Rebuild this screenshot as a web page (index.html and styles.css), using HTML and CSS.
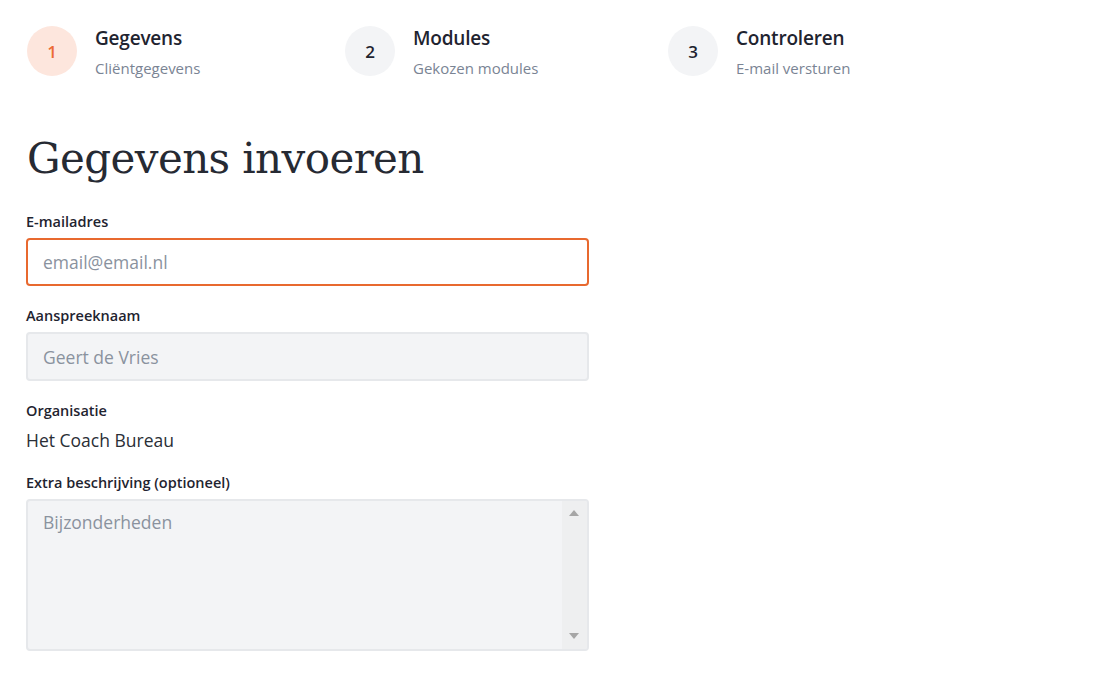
FILE: index.html
```html
<!DOCTYPE html>
<html lang="nl">
<head>
<meta charset="utf-8">
<title>Gegevens invoeren</title>
<link rel="stylesheet" href="styles.css">
</head>
<body>
<div class="page">
  <ol class="steps">
    <li class="step step-active">
      <span class="step-num">1</span>
      <div class="step-text">
        <span class="step-title">Gegevens</span>
        <span class="step-sub">Cliëntgegevens</span>
      </div>
    </li>
    <li class="step">
      <span class="step-num">2</span>
      <div class="step-text">
        <span class="step-title">Modules</span>
        <span class="step-sub">Gekozen modules</span>
      </div>
    </li>
    <li class="step">
      <span class="step-num">3</span>
      <div class="step-text">
        <span class="step-title">Controleren</span>
        <span class="step-sub">E-mail versturen</span>
      </div>
    </li>
  </ol>

  <h1 class="title">Gegevens invoeren</h1>

  <form class="form">
    <div class="field">
      <label class="label" for="email">E-mailadres</label>
      <input class="input input-focus" id="email" type="email" placeholder="email@email.nl">
    </div>
    <div class="field">
      <label class="label" for="naam">Aanspreeknaam</label>
      <input class="input input-muted" id="naam" type="text" placeholder="Geert de Vries">
    </div>
    <div class="field">
      <span class="label">Organisatie</span>
      <span class="value">Het Coach Bureau</span>
    </div>
    <div class="field field-extra">
      <label class="label" for="extra">Extra beschrijving (optioneel)</label>
      <div class="textarea-wrap">
        <textarea class="input input-muted textarea" id="extra" placeholder="Bijzonderheden"></textarea>
        <div class="scrollbar" aria-hidden="true">
          <span class="arrow arrow-up"></span>
          <span class="arrow arrow-down"></span>
        </div>
      </div>
    </div>
  </form>
</div>
</body>
</html>
```

FILE: styles.css
```css
* { box-sizing: border-box; }
html, body {
  margin: 0;
  padding: 0;
  background: #ffffff;
}
body {
  font-family: "Open Sans", "Liberation Sans", sans-serif;
  color: #1f2430;
}
.page {
  padding: 26px 26px 0 27px;
}
.steps {
  list-style: none;
  margin: 0;
  padding: 0;
  display: grid;
  grid-template-columns: 318px 323px auto;
}
.step {
  display: flex;
  align-items: flex-start;
  gap: 18px;
}
.step-num {
  width: 50px;
  height: 50px;
  border-radius: 50%;
  background: #f3f4f6;
  color: #1f2430;
  display: flex;
  align-items: center;
  justify-content: center;
  font-size: 17px;
  font-weight: 600;
  flex: none;
}
.step-active .step-num {
  background: #fde6dd;
  color: #ec6a35;
}
.step-text {
  display: flex;
  flex-direction: column;
  margin-top: -1px;
}
.step-title {
  font-size: 19px;
  font-weight: 600;
  line-height: 26px;
  color: #1f2430;
  letter-spacing: -0.2px;
}
.step-sub {
  margin-top: 8px;
  font-size: 15px;
  line-height: 18px;
  color: #7a8494;
}
.title {
  margin: 54px 0 0 0;
  font-family: "DejaVu Serif", "Liberation Serif", serif;
  font-weight: 400;
  font-size: 42px;
  line-height: 56px;
  color: #262a33;
  letter-spacing: -0.6px;
}
.form {
  margin-top: 25px;
  width: 563px;
  margin-left: -1px;
  display: flex;
  flex-direction: column;
  gap: 20px;
}
.field {
  display: flex;
  flex-direction: column;
}
.field-extra {
  margin-top: 2px;
}
.label {
  font-size: 14.5px;
  font-weight: 600;
  line-height: 20px;
  color: #1f2430;
  margin-bottom: 6px;
}
.input {
  width: 100%;
  height: 48px;
  border: 2px solid #e6e8eb;
  border-radius: 4px;
  padding: 0 15px;
  font-family: "Open Sans", "Liberation Sans", sans-serif;
  font-size: 17.5px;
  color: #1f2430;
  background: #ffffff;
  outline: none;
}
.input::placeholder {
  color: #8a929e;
}
.input-focus {
  border-color: #e8692f;
}
.input-muted {
  background: #f3f4f6;
  height: 49px;
}
.value {
  font-size: 17.5px;
  line-height: 22px;
  color: #2a2e36;
  margin-top: 2px;
}
.textarea-wrap {
  position: relative;
}
.textarea {
  display: block;
  height: 152px;
  padding: 9px 40px 9px 15px;
  resize: none;
  overflow: hidden;
  line-height: 24px;
}
.scrollbar {
  position: absolute;
  top: 2px;
  right: 2px;
  bottom: 2px;
  width: 25px;
  background: #eeeff0;
  border-radius: 0 2px 2px 0;
}
.arrow {
  position: absolute;
  left: 7px;
  width: 0;
  height: 0;
  border-left: 5.5px solid transparent;
  border-right: 5.5px solid transparent;
}
.arrow-up {
  top: 9px;
  border-bottom: 6px solid #a6a6a6;
}
.arrow-down {
  bottom: 10px;
  border-top: 6px solid #a6a6a6;
}
```
